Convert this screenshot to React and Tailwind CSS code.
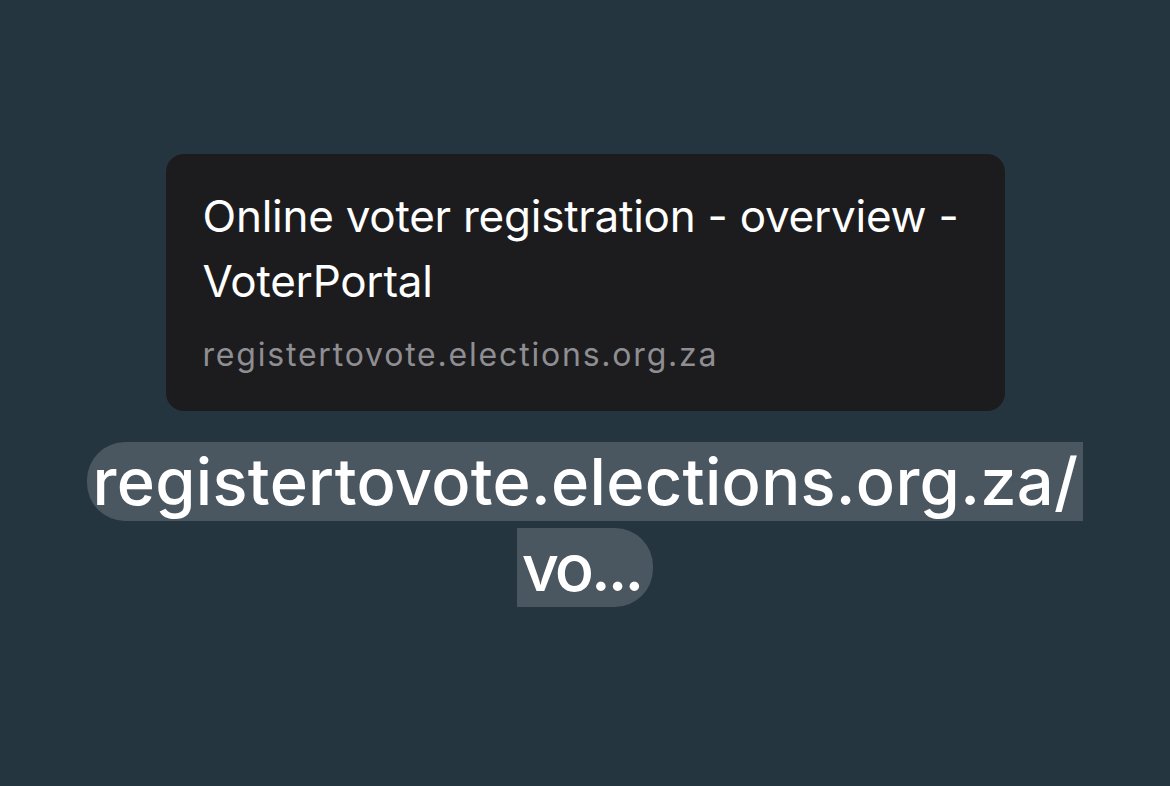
export default function App() {
  return (
    <div
      className="w-full h-screen bg-[#253540] flex flex-col items-center pt-[154px]"
      style={{ fontFamily: "Inter, 'Noto Sans', sans-serif" }}
    >
      <div className="w-[839px] h-[257px] bg-[#1c1c1e] rounded-[18px] px-[37px] pt-[30px]">
        <p className="text-white text-[44px] leading-[65px] tracking-[-0.25px]">
          Online voter registration - overview - VoterPortal
        </p>
        <p className="text-[#8e8e93] text-[32px] leading-[40px] tracking-[1.8px] mt-[21px]">
          registertovote.elections.org.za
        </p>
      </div>

      <div className="mt-[31px] flex flex-col items-center gap-[7px] text-white text-[65px] leading-[79px] font-medium">
        <span className="h-[79px] bg-[#4a5761] rounded-l-[38px] pl-[6px] pr-[5px] tracking-[0.3px]">
          registertovote.elections.org.za/
        </span>
        <span className="h-[79px] bg-[#4a5761] rounded-r-[38px] pl-[5px] pr-[12px] tracking-[-3px]">
          vo...
        </span>
      </div>
    </div>
  );
}
